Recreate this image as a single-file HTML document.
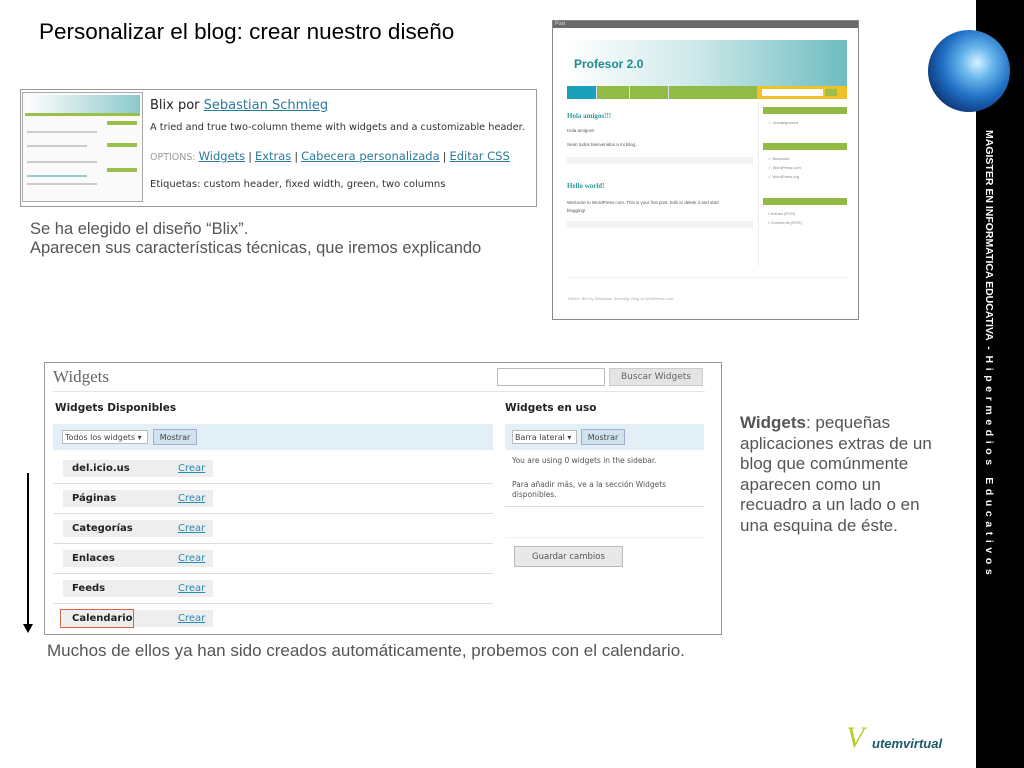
<!DOCTYPE html>
<html><head><meta charset="utf-8"><style>
*{margin:0;padding:0;box-sizing:border-box}
body{width:1024px;height:768px;background:#fff;position:relative;overflow:hidden;font-family:"Liberation Sans","DejaVu Sans",sans-serif}
.a{position:absolute}
.dv{font-family:"DejaVu Sans",sans-serif}
.row{position:absolute;left:63px;width:150px;height:17px;background:#eee;font:bold 10px "DejaVu Sans",sans-serif;color:#222;padding:3px 0 0 9px}
.row span{position:absolute;left:115px;color:#2a8ab0;font-weight:normal;text-decoration:underline}
.sep{position:absolute;left:53px;width:440px;height:1px;background:#ddd}
.sb{position:absolute;left:215px;font-size:4px;color:#888}
</style></head><body>
<div class="a" style="left:39px;top:19px;font-size:22.5px;color:#000">Personalizar el blog: crear nuestro diseño</div>

<!-- Blix box -->
<div class="a" style="left:20px;top:89px;width:517px;height:118px;border:1px solid #999"></div>
<div class="a" style="left:22px;top:92px;width:121px;height:110px;border:1px solid #aaa;background:#fafafa">
 <div class="a" style="left:2px;top:2px;width:115px;height:18px;background:linear-gradient(90deg,#fff,#8cc9cc)"></div>
 <div class="a" style="left:2px;top:20px;width:115px;height:3px;background:#9bbf4c"></div>
 <div class="a" style="left:84px;top:28px;width:30px;height:4px;background:#9bbf4c"></div>
 <div class="a" style="left:84px;top:50px;width:30px;height:4px;background:#9bbf4c"></div>
 <div class="a" style="left:84px;top:75px;width:30px;height:4px;background:#9bbf4c"></div>
 <div class="a" style="left:4px;top:38px;width:70px;height:2px;background:#ccc"></div>
 <div class="a" style="left:4px;top:52px;width:60px;height:2px;background:#ccc"></div>
 <div class="a" style="left:4px;top:68px;width:70px;height:2px;background:#ccc"></div>
 <div class="a" style="left:4px;top:82px;width:60px;height:2px;background:#9cc"></div>
 <div class="a" style="left:4px;top:90px;width:70px;height:2px;background:#ccc"></div>
</div>
<div class="a dv" style="left:150px;top:98px;font-size:13px;color:#222">Blix por <span style="color:#2a7a9a;text-decoration:underline">Sebastian Schmieg</span></div>
<div class="a dv" style="left:150px;top:122px;font-size:9.75px;color:#333">A tried and true two-column theme with widgets and a customizable header.</div>
<div class="a dv" style="left:150px;top:149px;font-size:9.5px;color:#999">OPTIONS: <span style="font-size:11.5px;color:#2a7a9a;text-decoration:underline">Widgets</span> <span style="color:#333;font-size:11px">|</span> <span style="font-size:11.5px;color:#2a7a9a;text-decoration:underline">Extras</span> <span style="color:#333;font-size:11px">|</span> <span style="font-size:11.5px;color:#2a7a9a;text-decoration:underline">Cabecera personalizada</span> <span style="color:#333;font-size:11px">|</span> <span style="font-size:11.5px;color:#2a7a9a;text-decoration:underline">Editar CSS</span></div>
<div class="a dv" style="left:150px;top:179px;font-size:10px;color:#333">Etiquetas: custom header, fixed width, green, two columns</div>

<div class="a" style="left:30px;top:220px;font-size:16.5px;color:#555;line-height:19px">Se ha elegido el diseño “Blix”.<br>Aparecen sus características técnicas, que iremos explicando</div>

<!-- Profesor screenshot -->
<div class="a" style="left:552px;top:20px;width:307px;height:300px;border:1px solid #888;background:#fff">
 <div class="a" style="left:0;top:0;width:305px;height:7px;background:#6a6a6a;color:#ddd;font-size:5px;padding-left:2px">Post</div>
 <div class="a" style="left:14px;top:19px;width:280px;height:46px;background:linear-gradient(90deg,#fff 0%,#cfe9ea 45%,#6ebdc0 100%)"></div>
 <div class="a" style="left:21px;top:36px;font-size:12px;font-weight:bold;color:#1d8a94">Profesor 2.0</div>
 <div class="a" style="left:14px;top:65px;width:190px;height:13px;background:#92bb46"></div>
 <div class="a" style="left:14px;top:65px;width:29px;height:13px;background:#1aa0b8"></div>
 <div class="a" style="left:43px;top:65px;width:1px;height:13px;background:#dde"></div>
 <div class="a" style="left:76px;top:65px;width:1px;height:13px;background:#dde"></div>
 <div class="a" style="left:115px;top:65px;width:1px;height:13px;background:#dde"></div>
 <div class="a" style="left:204px;top:65px;width:90px;height:13px;background:#f4c02a"></div>
 <div class="a" style="left:209px;top:68px;width:61px;height:7px;background:#fff"></div>
 <div class="a" style="left:272px;top:68px;width:12px;height:7px;background:#9bbf4c"></div>
 <div class="a" style="left:210px;top:86px;width:84px;height:7px;background:#92bb46"></div>
 <div class="a" style="left:210px;top:122px;width:84px;height:7px;background:#92bb46"></div>
 <div class="a" style="left:210px;top:177px;width:84px;height:7px;background:#92bb46"></div>
 <div class="sb" style="top:99px">✓ Uncategorized</div>
 <div class="sb" style="top:135px">✓ Buscador</div>
 <div class="sb" style="top:144px">✓ WordPress.com</div>
 <div class="sb" style="top:153px">✓ WordPress.org</div>
 <div class="sb" style="top:190px">▪ Entries (RSS)</div>
 <div class="sb" style="top:199px">▪ Comments (RSS)</div>
 <div class="a" style="left:14px;top:91px;font:bold 7px 'Liberation Serif',serif;color:#2a9a9a">Hola amigos!!!</div>
 <div class="a" style="left:14px;top:107px;font-size:4.5px;color:#555">Hola amigos!!</div>
 <div class="a" style="left:14px;top:121px;font-size:4.5px;color:#555">Sean todos bienvenidos a mi Blog...</div>
 <div class="a" style="left:14px;top:136px;width:186px;height:7px;background:#f3f3f3"></div>
 <div class="a" style="left:14px;top:161px;font:bold 7px 'Liberation Serif',serif;color:#2a9a9a">Hello world!</div>
 <div class="a" style="left:14px;top:178px;font-size:4.5px;color:#555;line-height:8px">Welcome to WordPress.com. This is your first post. Edit or delete it and start<br>blogging!</div>
 <div class="a" style="left:14px;top:200px;width:186px;height:7px;background:#f3f3f3"></div>
 <div class="a" style="left:205px;top:80px;width:1px;height:165px;background:#eee"></div>
 <div class="a" style="left:14px;top:256px;width:280px;height:1px;background:#eee"></div>
 <div class="a" style="left:14px;top:275px;font-size:4px;color:#aaa">Theme: Blix by Sebastian Schmieg. Blog at WordPress.com.</div>
</div>

<!-- Widgets panel -->
<div class="a" style="left:44px;top:362px;width:678px;height:273px;border:1px solid #999;background:#fff"></div>
<div class="a" style="left:53px;top:367px;font:17px 'Liberation Serif',serif;color:#666">Widgets</div>
<div class="a" style="left:53px;top:391px;width:652px;height:1px;background:#e4e4e4"></div>
<div class="a" style="left:497px;top:368px;width:108px;height:18px;border:1px solid #bbb"></div>
<div class="a dv" style="left:609px;top:368px;width:94px;height:18px;background:#e4e4e4;border:1px solid #ccc;font-size:9px;color:#666;text-align:center;padding-top:3px">Buscar Widgets</div>
<div class="a dv" style="left:55px;top:402px;font-size:10.5px;font-weight:bold;color:#222">Widgets Disponibles</div>
<div class="a dv" style="left:505px;top:402px;font-size:10.5px;font-weight:bold;color:#222">Widgets en uso</div>
<div class="a" style="left:53px;top:424px;width:440px;height:26px;background:#e3eff6"></div>
<div class="a" style="left:505px;top:424px;width:199px;height:26px;background:#e3eff6"></div>
<div class="a dv" style="left:62px;top:430px;width:86px;height:14px;background:#fff;border:1px solid #bbb;font-size:8px;color:#444;padding:2px 0 0 2px">Todos los widgets ▾</div>
<div class="a dv" style="left:153px;top:429px;width:44px;height:16px;background:#cfe3ef;border:1px solid #aac;font-size:8px;color:#444;text-align:center;padding-top:3px">Mostrar</div>
<div class="a dv" style="left:512px;top:430px;width:65px;height:14px;background:#fff;border:1px solid #bbb;font-size:8px;color:#444;padding:2px 0 0 2px">Barra lateral ▾</div>
<div class="a dv" style="left:581px;top:429px;width:44px;height:16px;background:#cfe3ef;border:1px solid #aac;font-size:8px;color:#444;text-align:center;padding-top:3px">Mostrar</div>
<div class="row" style="top:460px">del.icio.us<span>Crear</span></div>
<div class="sep" style="top:483px"></div>
<div class="row" style="top:490px">Páginas<span>Crear</span></div>
<div class="sep" style="top:513px"></div>
<div class="row" style="top:520px">Categorías<span>Crear</span></div>
<div class="sep" style="top:543px"></div>
<div class="row" style="top:550px">Enlaces<span>Crear</span></div>
<div class="sep" style="top:573px"></div>
<div class="row" style="top:580px">Feeds<span>Crear</span></div>
<div class="sep" style="top:603px"></div>
<div class="row" style="top:610px">Calendario<span>Crear</span></div>
<div class="a" style="left:60px;top:609px;width:74px;height:19px;border:1.5px solid #e06040"></div>
<div class="a dv" style="left:512px;top:456px;font-size:7.5px;color:#555">You are using 0 widgets in the sidebar.</div>
<div class="a dv" style="left:512px;top:480px;font-size:7.5px;color:#555;line-height:10px">Para añadir más, ve a la sección Widgets<br>disponibles.</div>
<div class="a" style="left:505px;top:506px;width:199px;height:1px;background:#ddd"></div>
<div class="a" style="left:505px;top:537px;width:199px;height:1px;background:#eee"></div>
<div class="a dv" style="left:514px;top:546px;width:109px;height:21px;background:#e8e8e8;border:1px solid #bbb;font-size:8.5px;color:#555;text-align:center;padding-top:5px">Guardar cambios</div>

<!-- arrow -->
<div class="a" style="left:27px;top:473px;width:2px;height:152px;background:#000"></div>
<div class="a" style="left:23px;top:624px;width:0;height:0;border-left:5px solid transparent;border-right:5px solid transparent;border-top:9px solid #000"></div>

<div class="a" style="left:47px;top:641px;font-size:17px;color:#555">Muchos de ellos ya han sido creados automáticamente, probemos con el calendario.</div>

<div class="a" style="left:740px;top:413px;font-size:17px;color:#555;line-height:20.5px"><b>Widgets</b>: pequeñas<br>aplicaciones extras de un<br>blog que comúnmente<br>aparecen como un<br>recuadro a un lado o en<br>una esquina de éste.</div>

<!-- right bar -->
<div class="a" style="left:976px;top:0;width:48px;height:768px;background:#000"></div>
<div class="a" style="left:928px;top:30px;width:82px;height:82px;border-radius:50%;background:radial-gradient(circle at 60% 40%,#d8f2ff 0%,#6ab8ee 22%,#1f6fc4 50%,#0b2f6e 80%,rgba(255,255,255,0) 100%)"></div>
<div class="a" style="left:995px;top:130px;width:0;height:0">
 <div style="transform:rotate(90deg);transform-origin:0 0;white-space:nowrap;font:bold 10.5px 'Liberation Sans Narrow','Liberation Sans',sans-serif;color:#fff;position:absolute;left:0;top:0;width:440px">MAGISTER EN INFORMATICA EDUCATIVA &nbsp;- &nbsp;<span style="letter-spacing:4.6px">Hipermedios Educativos</span></div>
</div>

<!-- logo -->
<div class="a" style="left:846px;top:721px;font:italic 30px 'Liberation Serif',serif;color:#b8cc2a">V</div>
<div class="a" style="left:872px;top:736px;font:italic bold 13px 'Liberation Sans',sans-serif;color:#1a5a6a">utemvirtual</div>
</body></html>
